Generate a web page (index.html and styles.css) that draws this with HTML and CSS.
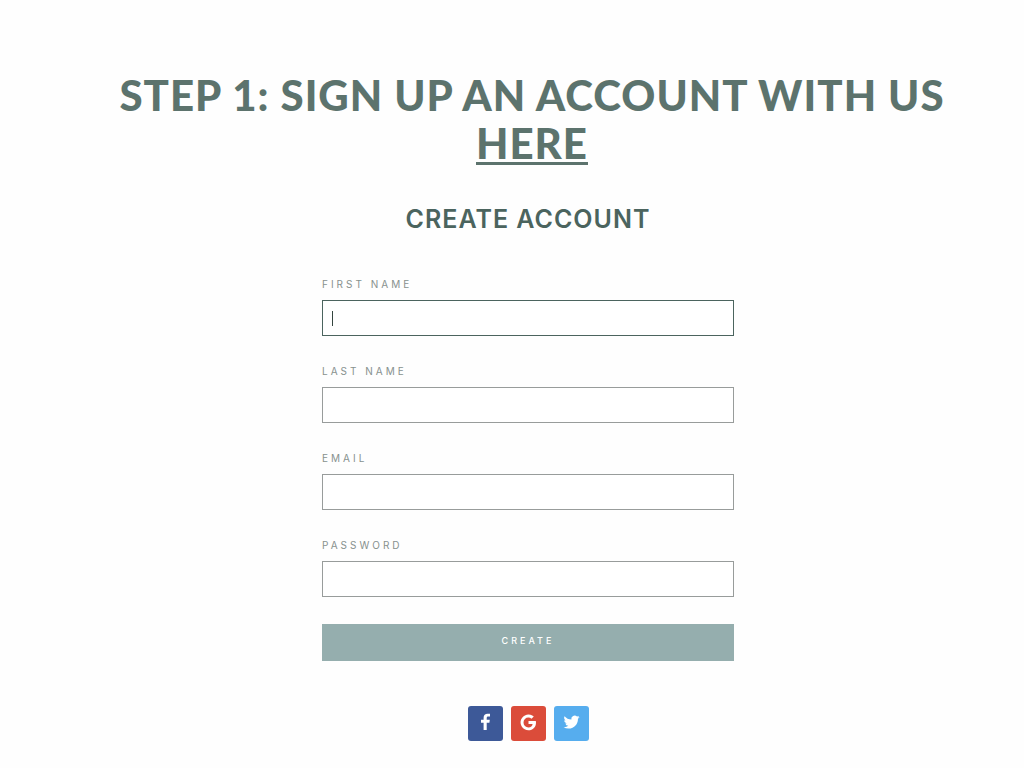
FILE: index.html
```html
<!DOCTYPE html>
<html lang="en">
<head>
<meta charset="utf-8">
<meta name="viewport" content="width=device-width, initial-scale=1">
<title>Create Account</title>
<link rel="stylesheet" href="styles.css">
</head>
<body>
<main class="page">
<h1 class="step">STEP 1: SIGN UP AN ACCOUNT WITH US <a href="#register">HERE</a></h1>

<form class="register" id="register" action="#" method="post">
    <h2 class="title">CREATE ACCOUNT</h2>

    <div class="field">
	<label for="first_name">FIRST NAME</label>
	<input class="active" type="text" id="first_name" name="first_name">
    </div>
    <div class="field">
	<label for="last_name">LAST NAME</label>
	<input type="text" id="last_name" name="last_name">
    </div>
    <div class="field">
	<label for="email">EMAIL</label>
	<input type="email" id="email" name="email">
    </div>
    <div class="field">
	<label for="password">PASSWORD</label>
	<input type="password" id="password" name="password">
    </div>

    <button class="create" type="submit">CREATE</button>
</form>

<div class="social">
    <a class="facebook" href="#" aria-label="Facebook">
	<svg viewBox="0 0 35 35"><path d="M15.6 24v-7.300H13v-2.900h2.600v-2.100c0-2.600 1.600-4 4-4 1.100 0 2.100.1 2.400.1v2.800h-1.700c-1.300 0-1.600.6-1.600 1.500v1.700h3.100l-.4 2.900h-2.700V24z"/></svg>
    </a>
    <a class="google" href="#" aria-label="Google">
	<svg viewBox="0 0 35 35"><path d="M17.500 14.900h7.300c.1.500.2 1 .2 1.600 0 4.600-3 7.800-7.600 7.800a7.900 7.900 0 1 1 5.400-13.700l-2.300 2.200a4.700 4.700 0 0 0-3.100-1.200 4.900 4.900 0 0 0 0 9.800c2.500 0 3.900-1.500 4.200-3.500h-4.100z"/></svg>
    </a>
    <a class="twitter" href="#" aria-label="Twitter">
	<svg viewBox="0 0 24 24"><path transform="translate(6.500 5.500) scale(.46)" d="M23.950 4.570a10 10 0 0 1-2.820.77 4.960 4.960 0 0 0 2.160-2.720c-.95.550-2 .95-3.120 1.180a4.920 4.920 0 0 0-8.380 4.480C7.690 8.090 4.070 6.130 1.640 3.160a4.820 4.820 0 0 0-.67 2.480c0 1.710.87 3.210 2.190 4.100a4.900 4.900 0 0 1-2.230-.62v.06a4.920 4.920 0 0 0 3.950 4.830 5 5 0 0 1-2.210.08 4.940 4.940 0 0 0 4.600 3.420A9.870 9.870 0 0 1 0 19.540a13.990 13.990 0 0 0 7.550 2.210c9.050 0 14-7.500 14-13.980 0-.21 0-.42-.02-.63a9.940 9.940 0 0 0 2.460-2.550z"/></svg>
    </a>
</div>
</main>
</body>
</html>
```
FILE: styles.css
```css
body {
    margin: 0;
    background: #fefefe;
    font-family: Inter, "Liberation Sans", sans-serif;
}

.page {
    padding: 71px 0 24px 32px;
}

.step {
    margin: 0;
    padding: 0 64px 0 72px;
    font-family: Lato, "Open Sans", sans-serif;
    font-size: 42px;
    line-height: 48px;
    font-weight: 900;
    letter-spacing: 1px;
    text-align: center;
    color: #5c736d;
}

.step a {
    color: inherit;
    text-decoration: underline;
    text-decoration-thickness: 3px;
    text-underline-offset: 3px;
}

.register {
    max-width: 412px;
    margin: 0 auto;
}

.title {
    margin: 36px 0 41px;
    font-size: 25px;
    line-height: 32px;
    font-weight: 600;
    letter-spacing: 1px;
    text-align: center;
    color: #4b645e;
}

.field {
    display: flex;
    flex-direction: column;
    gap: 8px;
    margin-bottom: 27px;
}

.field label {
    font-size: 10px;
    line-height: 16px;
    letter-spacing: 3px;
    color: #87918e;
}

.field input {
    box-sizing: border-box;
    width: 100%;
    height: 36px;
    padding: 0 8px;
    border: 1px solid #989c9b;
    border-radius: 0;
    background: #fff;
    font: inherit;
    font-size: 14px;
    outline: none;
}

/* text cursor in the current field */
.field input.active {
    border-color: #4b645e;
    background: #fff linear-gradient(#34453f, #34453f) no-repeat 9px 10px / 1px 15px;
}

.create {
    display: block;
    width: 100%;
    height: 37px;
    padding: 0 0 4px;
    border: none;
    background: #95aeae;
    color: #fff;
    font: inherit;
    font-size: 9px;
    font-weight: 500;
    letter-spacing: 3px;
    cursor: pointer;
}

.social {
    display: flex;
    justify-content: center;
    gap: 8px;
    margin-top: 45px;
}

.social a {
    width: 35px;
    height: 35px;
    border-radius: 3px;
}

.social svg {
    display: block;
    fill: #fff;
}

.facebook {
    background: #3d5998;
}

.google {
    background: #db4c3a;
}

.twitter {
    background: #56adee;
}
```
